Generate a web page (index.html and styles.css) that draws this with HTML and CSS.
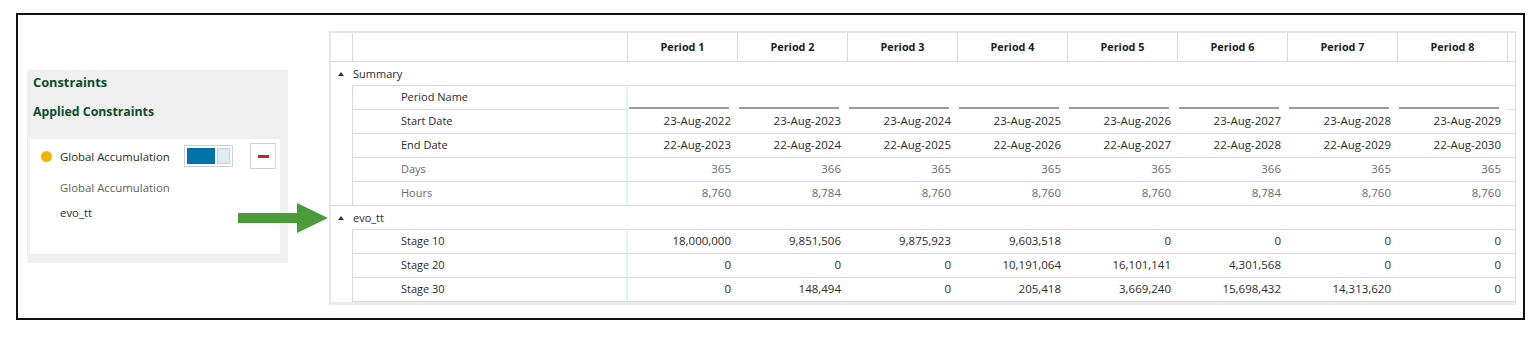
FILE: index.html
```html
<!DOCTYPE html>
<html lang="en">
<head>
    <meta charset="UTF-8">
    <meta name="viewport" content="width=device-width, initial-scale=1.0">
    <title>Constraints - Period Summary</title>
    <link rel="stylesheet" href="styles.css">
</head>
<body>
    <div class="frame">
        <aside class="constraints">
            <h3 class="constraints-title">Constraints</h3>
            <h3 class="constraints-sub">Applied Constraints</h3>
            <div class="constraint-card">
                <div class="constraint-row">
                    <span class="dot"></span>
                    <span class="constraint-name">Global Accumulation</span>
                    <span class="toggle"><span class="toggle-on"></span><span class="toggle-off"></span></span>
                    <button class="remove-btn" title="Remove"><span></span></button>
                </div>
                <div class="constraint-type">Global Accumulation</div>
                <div class="constraint-model">evo_tt</div>
            </div>
        </aside>

        <div class="arrow">
            <svg width="90" height="30" viewBox="0 0 90 30">
                <polygon points="0,10 59,10 59,0 90,15 59,30 59,20 0,20" fill="#4b9b3a"/>
            </svg>
        </div>

        <div class="grid">
            <!-- header -->
            <div class="row head">
                <div class="gutter"></div>
                <div class="label"></div>
                <div class="cell">Period 1</div>
                <div class="cell">Period 2</div>
                <div class="cell">Period 3</div>
                <div class="cell">Period 4</div>
                <div class="cell">Period 5</div>
                <div class="cell">Period 6</div>
                <div class="cell">Period 7</div>
                <div class="cell">Period 8</div>
                <div class="filler"></div>
            </div>

            <!-- Summary group -->
            <div class="row group">
                <span class="caret"></span>Summary
            </div>
            <div class="row sub">
                <div class="gutter"></div>
                <div class="label">Period Name</div>
                <div class="cell"><span class="input"></span></div>
                <div class="cell"><span class="input"></span></div>
                <div class="cell"><span class="input"></span></div>
                <div class="cell"><span class="input"></span></div>
                <div class="cell"><span class="input"></span></div>
                <div class="cell"><span class="input"></span></div>
                <div class="cell"><span class="input"></span></div>
                <div class="cell"><span class="input"></span></div>
                <div class="filler"></div>
            </div>
            <div class="row sub after-input">
                <div class="gutter"></div>
                <div class="label">Start Date</div>
                <div class="cell">23-Aug-2022</div>
                <div class="cell">23-Aug-2023</div>
                <div class="cell">23-Aug-2024</div>
                <div class="cell">23-Aug-2025</div>
                <div class="cell">23-Aug-2026</div>
                <div class="cell">23-Aug-2027</div>
                <div class="cell">23-Aug-2028</div>
                <div class="cell">23-Aug-2029</div>
                <div class="filler"></div>
            </div>
            <div class="row sub">
                <div class="gutter"></div>
                <div class="label">End Date</div>
                <div class="cell">22-Aug-2023</div>
                <div class="cell">22-Aug-2024</div>
                <div class="cell">22-Aug-2025</div>
                <div class="cell">22-Aug-2026</div>
                <div class="cell">22-Aug-2027</div>
                <div class="cell">22-Aug-2028</div>
                <div class="cell">22-Aug-2029</div>
                <div class="cell">22-Aug-2030</div>
                <div class="filler"></div>
            </div>
            <div class="row sub muted">
                <div class="gutter"></div>
                <div class="label">Days</div>
                <div class="cell">365</div>
                <div class="cell">366</div>
                <div class="cell">365</div>
                <div class="cell">365</div>
                <div class="cell">365</div>
                <div class="cell">366</div>
                <div class="cell">365</div>
                <div class="cell">365</div>
                <div class="filler"></div>
            </div>
            <div class="row sub muted">
                <div class="gutter"></div>
                <div class="label">Hours</div>
                <div class="cell">8,760</div>
                <div class="cell">8,784</div>
                <div class="cell">8,760</div>
                <div class="cell">8,760</div>
                <div class="cell">8,760</div>
                <div class="cell">8,784</div>
                <div class="cell">8,760</div>
                <div class="cell">8,760</div>
                <div class="filler"></div>
            </div>

            <!-- evo_tt group -->
            <div class="row group">
                <span class="caret"></span>evo_tt
            </div>
            <div class="row sub">
                <div class="gutter"></div>
                <div class="label">Stage 10</div>
                <div class="cell">18,000,000</div>
                <div class="cell">9,851,506</div>
                <div class="cell">9,875,923</div>
                <div class="cell">9,603,518</div>
                <div class="cell">0</div>
                <div class="cell">0</div>
                <div class="cell">0</div>
                <div class="cell">0</div>
                <div class="filler"></div>
            </div>
            <div class="row sub">
                <div class="gutter"></div>
                <div class="label">Stage 20</div>
                <div class="cell">0</div>
                <div class="cell">0</div>
                <div class="cell">0</div>
                <div class="cell">10,191,064</div>
                <div class="cell">16,101,141</div>
                <div class="cell">4,301,568</div>
                <div class="cell">0</div>
                <div class="cell">0</div>
                <div class="filler"></div>
            </div>
            <div class="row sub last">
                <div class="gutter"></div>
                <div class="label">Stage 30</div>
                <div class="cell">0</div>
                <div class="cell">148,494</div>
                <div class="cell">0</div>
                <div class="cell">205,418</div>
                <div class="cell">3,669,240</div>
                <div class="cell">15,698,432</div>
                <div class="cell">14,313,620</div>
                <div class="cell">0</div>
                <div class="filler"></div>
            </div>
        </div>
    </div>
</body>
</html>
```

FILE: styles.css
```css
* {
    box-sizing: border-box;
}

body {
    margin: 0;
    font-family: "Open Sans", "Noto Sans", sans-serif;
    color: #2b2b2b;
    background: #fff;
}

.frame {
    position: relative;
    display: flex;
    align-items: flex-start;
    width: 1509px;
    height: 307px;
    margin: 13px 0 0 16px;
    padding: 16px 0 0 9px;
    border: 2px solid #111;
}

/* left constraints panel */

.constraints {
    width: 261px;
    height: 193px;
    margin-top: 39px;
    padding: 3px 8px 0 3px;
    background: #f0f0f0;
}

.constraints h3 {
    margin: 0;
    padding-left: 3px;
    color: #0a4e2a;
    font-weight: 700;
    line-height: 18px;
}

.constraints-title {
    font-size: 12.8px;
}

.constraints-sub {
    margin-top: 12px !important;
    font-size: 12.3px;
}

.constraint-card {
    height: 115px;
    margin-top: 18px;
    padding: 4px 0 0 11px;
    background: #fff;
    font-size: 11.4px;
}

.constraint-row {
    display: flex;
    align-items: center;
    height: 26px;
}

.dot {
    width: 11px;
    height: 11px;
    border-radius: 50%;
    background: #f5b400;
}

.constraint-name {
    width: 124px;
    margin-left: 8px;
}

.toggle {
    display: flex;
    gap: 2px;
    width: 49px;
    height: 22px;
    padding: 2px;
    border: 1px solid #cfcfe0;
    background: #fff;
}

.toggle-on {
    width: 28px;
    background: #0073a8;
}

.toggle-off {
    width: 13px;
    background: #dcebf4;
    border: 1px solid #c4d6e4;
}

.remove-btn {
    display: flex;
    align-items: center;
    justify-content: center;
    width: 26px;
    height: 26px;
    margin-left: 17px;
    padding: 0;
    border: 1px solid #d0d0e0;
    background: #fff;
    cursor: pointer;
}

.remove-btn span {
    width: 11px;
    height: 3px;
    background: #c8232c;
}

.constraint-type,
.constraint-model {
    margin-left: 19px;
    line-height: 16px;
}

.constraint-type {
    margin-top: 11px;
    color: #606060;
}

.constraint-model {
    margin-top: 9px;
}

/* pointer arrow */

.arrow {
    position: absolute;
    left: 220px;
    top: 188px;
    line-height: 0;
}

/* period grid */

.grid {
    width: 1187px;
    margin-left: 41px;
    border-top: 2px solid #e6e6e6;
    border-left: 2px solid #e6e6e6;
    border-bottom: 3px solid #ececec;
    border-right: 1px solid #d7d7e5;
}

.row {
    display: grid;
    grid-template-columns: 21px 276px repeat(8, 110px) 7px;
    height: 24px;
    line-height: 21px;
}

.row.head {
    height: 28px;
    line-height: 28px;
    font-size: 10.8px;
    font-weight: 700;
    color: #222;
}

.head .label {
    border-left: 1px solid #d7d7e5;
    border-right: 1px solid #d7d7e5;
}

.head .cell {
    text-align: center;
    border-right: 1px solid #d7d7e5;
}

.row.group {
    display: flex;
    align-items: center;
    padding-left: 7px;
    border-top: 1px solid #d7d7e5;
    font-size: 11px;
}

.caret {
    width: 0;
    height: 0;
    margin-right: 9px;
    border-left: 3px solid transparent;
    border-right: 3px solid transparent;
    border-bottom: 4px solid #333;
}

.sub .label,
.sub .cell,
.sub .filler {
    border-top: 1px solid #d7d7e5;
}

.sub .label {
    padding-left: 48px;
    border-left: 1px solid #d7d7e5;
    border-right: 2px solid #e4f0fa;
    font-size: 11px;
}

.sub .cell {
    padding-right: 7px;
    text-align: right;
    font-size: 11.5px;
}

.after-input .cell {
    border-top-color: transparent;
}

.sub .input {
    display: block;
    height: 23px;
    margin: 0 2px 0 1px;
    border-bottom: 2px solid #9c9c9c;
}

.muted .label,
.muted .cell {
    color: #6a6a6a;
}

.sub.last {
    height: 25px;
}

.last .label,
.last .cell,
.last .filler {
    border-bottom: 1px solid #d7d7e5;
}
```
